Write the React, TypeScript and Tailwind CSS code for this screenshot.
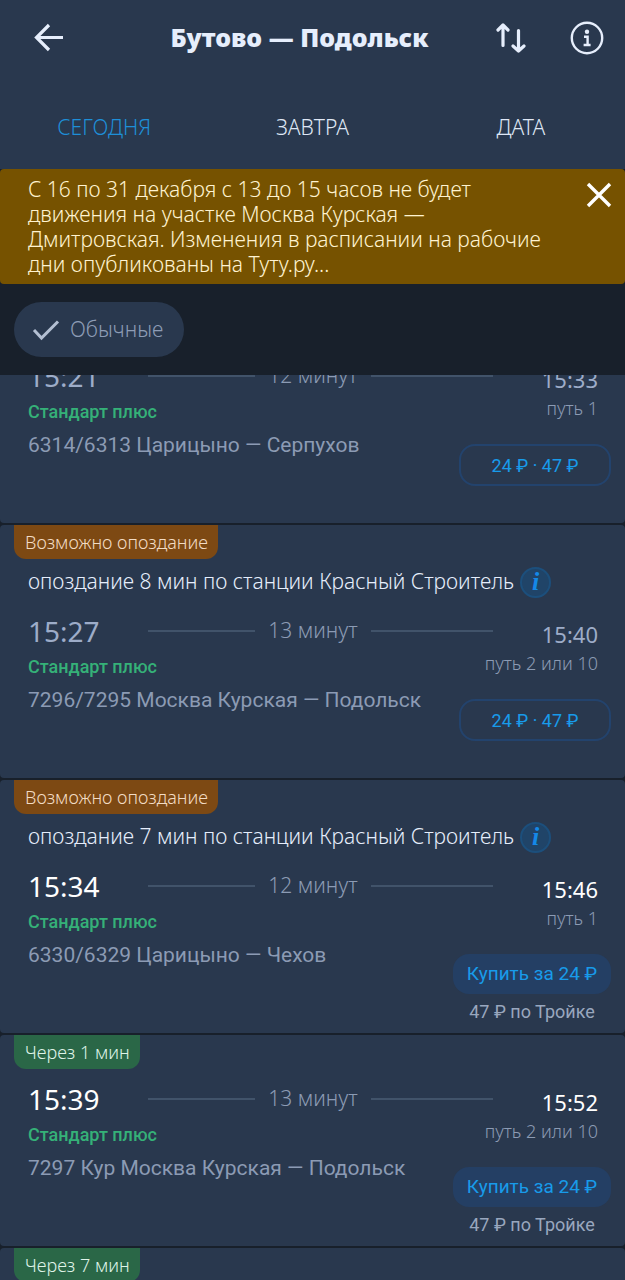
import { useState } from "react";

type Train = {
  departure: string;
  arrival: string;
  duration: string;
  route: string;
  track: string;
  badge?: { text: string; kind: "delay" | "soon" };
  delay?: string;
  gone?: boolean;
};

const TRAINS: Train[] = [
  {
    departure: "15:21",
    arrival: "15:33",
    duration: "12 минут",
    route: "6314/6313 Царицыно — Серпухов",
    track: "путь 1",
    gone: true,
  },
  {
    departure: "15:27",
    arrival: "15:40",
    duration: "13 минут",
    route: "7296/7295 Москва Курская — Подольск",
    track: "путь 2 или 10",
    badge: { text: "Возможно опоздание", kind: "delay" },
    delay: "опоздание 8 мин по станции Красный Строитель",
    gone: true,
  },
  {
    departure: "15:34",
    arrival: "15:46",
    duration: "12 минут",
    route: "6330/6329 Царицыно — Чехов",
    track: "путь 1",
    badge: { text: "Возможно опоздание", kind: "delay" },
    delay: "опоздание 7 мин по станции Красный Строитель",
  },
  {
    departure: "15:39",
    arrival: "15:52",
    duration: "13 минут",
    route: "7297 Кур Москва Курская — Подольск",
    track: "путь 2 или 10",
    badge: { text: "Через 1 мин", kind: "soon" },
  },
  {
    departure: "15:45",
    arrival: "15:58",
    duration: "13 минут",
    route: "6332 Царицыно — Подольск",
    track: "путь 1",
    badge: { text: "Через 7 мин", kind: "soon" },
  },
];

const TABS = ["СЕГОДНЯ", "ЗАВТРА", "ДАТА"];

export default function App() {
  const [tab, setTab] = useState(0);
  const [notice, setNotice] = useState(true);

  return (
    <div className="flex h-screen flex-col overflow-hidden bg-[#18202b] font-['Noto_Sans','Open_Sans',sans-serif] font-light text-[#e6eefc]">
      <header className="shrink-0 bg-[#29384e]">
        <TopBar />
        <nav className="grid h-[94px] grid-cols-3 pt-3">
          {TABS.map((name, i) => (
            <button
              key={name}
              onClick={() => setTab(i)}
              className={`text-[21px] ${tab === i ? "text-[#1e8fd8]" : "text-[#dfe7f5]"}`}
            >
              {name}
            </button>
          ))}
        </nav>
      </header>
      {notice && <Notice onClose={() => setNotice(false)} />}
      <Filters />
      <main className="min-h-0 flex-1 overflow-hidden">
        <ul className="-mt-[63px] space-y-0.5">
          {TRAINS.map((train) => (
            <TrainCard key={train.departure} train={train} />
          ))}
        </ul>
      </main>
    </div>
  );
}

function TopBar() {
  return (
    <div className="grid h-[75px] grid-cols-[1fr_auto_1fr] items-center">
      <button aria-label="Назад" className="ml-[34px] w-[30px]">
        <svg viewBox="0 0 30 30" className="size-[30px]" fill="none" stroke="currentColor" strokeWidth="3.2">
          <path d="M15 2 2.500 14.500 15 27M2.500 14.500H29" />
        </svg>
      </button>
      <h1 className="pr-[26px] text-[25px] font-black">Бутово — Подольск</h1>
      <div className="flex items-center justify-end gap-[43px] pr-[21px]">
        <button aria-label="Поменять направление">
          <svg
            viewBox="0 0 32 32"
            className="size-8"
            fill="none"
            stroke="currentColor"
            strokeWidth="3.2"
            strokeLinecap="round"
            strokeLinejoin="round"
          >
            <path d="M8 23.500V3.500M3 8l5-5 5 5M23.500 8.500v20M18 24l5.500 5 5.500-5" />
          </svg>
        </button>
        <button aria-label="Информация">
          <svg viewBox="0 0 34 34" className="size-[34px]" fill="none" stroke="currentColor" strokeWidth="2.4">
            <circle cx="17" cy="17" r="15.2" />
            <circle cx="17" cy="10.8" r="2.2" fill="currentColor" stroke="none" />
            <path d="M14 15.8h3.6v8M13.6 24h7" />
          </svg>
        </button>
      </div>
    </div>
  );
}

function Notice(props: { onClose: () => void }) {
  return (
    <section className="flex shrink-0 items-start justify-between rounded bg-[#765200] pt-2 pr-3 pb-[7px] pl-7 text-[#fff3d0]">
      <p className="max-w-[520px] text-[21px] leading-[25px]">
        С 16 по 31 декабря с 13 до 15 часов не будет движения на участке Москва
        Курская — Дмитровская. Изменения в расписании на рабочие дни
        опубликованы на Туту.ру...
      </p>
      <button aria-label="Закрыть" onClick={props.onClose} className="pt-1 text-white">
        <svg viewBox="0 0 28 28" className="size-7" fill="none" stroke="currentColor" strokeWidth="3.4">
          <path d="M3 3l22 22M25 3 3 25" />
        </svg>
      </button>
    </section>
  );
}

function Filters() {
  return (
    <div className="shrink-0 px-3.5 py-[18px]">
      <button
        aria-pressed="true"
        className="flex h-[55px] items-center gap-2.5 rounded-full bg-[#29384e] pr-[21px] pl-[18px] text-[21px] text-[#8d9cb5]"
      >
        <svg viewBox="0 0 28 28" className="size-7" fill="none" stroke="#b3bfd2" strokeWidth="3">
          <path d="M2 14l7.500 8L26 5.500" />
        </svg>
        Обычные
      </button>
    </div>
  );
}

function TrainCard(props: { train: Train }) {
  const { train } = props;
  const timeColor = train.gone ? "text-[#9dacc8]" : "text-white";
  return (
    <li className="rounded bg-[#29384e]">
      <div className="h-[34px] px-3.5">
        {train.badge && (
          <span
            className={`inline-block h-[34px] rounded-b-xl pr-2.5 pl-[11px] text-[18px] leading-[34px] ${
              train.badge.kind === "delay"
                ? "bg-[#7d4913] text-[#f3dcc4]"
                : "bg-[#2a6747] text-[#dff3e8]"
            }`}
          >
            {train.badge.text}
          </span>
        )}
      </div>
      {train.delay && (
        <div className="flex h-[42px] items-center gap-1.5 pt-1 pl-7">
          <p className="text-[21px]">{train.delay}</p>
          <DelayInfo />
        </div>
      )}
      <div className="flex h-[82px] pt-3 pr-[27px] pl-7">
        <div className="flex-1">
          <div className="flex h-9 items-center">
            <time className={`w-[120px] text-[28px] font-normal ${timeColor}`}>
              {train.departure}
            </time>
            <span className="h-0.5 w-[107px] bg-[#41536a]" />
            <span className="w-[116px] text-center text-[21px] text-[#8c9bb4]">
              {train.duration}
            </span>
            <span className="h-0.5 flex-1 bg-[#41536a]" />
          </div>
          <p className="mt-1 font-[Roboto] text-[18px] leading-7 font-medium text-[#35b178]">
            Стандарт плюс
          </p>
        </div>
        <div className="w-[105px] pt-1.5 text-right whitespace-nowrap">
          <time className={`block text-[22px] leading-[30px] font-normal ${timeColor}`}>
            {train.arrival}
          </time>
          <p className="flex justify-end text-[18px] leading-7 text-[#8c9bb4]">
            {train.track}
          </p>
        </div>
      </div>
      <div className="flex h-[95px] justify-between pr-3.5 pl-7 font-[Roboto] font-normal">
        <p className="pt-0.5 text-[21px] leading-[30px] text-[#8c9bb4]">
          {train.route}
        </p>
        <Price gone={train.gone} />
      </div>
    </li>
  );
}

function DelayInfo() {
  return (
    <button
      aria-label="Подробнее об опоздании"
      className="flex size-[31px] items-center justify-center rounded-full border-2 border-[#1c4f7c] bg-[#204468] font-['Liberation_Serif',serif] text-[26px] leading-none font-bold text-[#1489e8] italic"
    >
      i
    </button>
  );
}

function Price(props: { gone?: boolean }) {
  if (props.gone) {
    return (
      <div className="pt-4">
        <button className="h-[42px] w-[152px] rounded-2xl border-2 border-[#23436d] text-[18px] text-[#189bea]">
          24 ₽ · 47 ₽
        </button>
      </div>
    );
  }
  return (
    <div className="pt-4 text-center">
      <button className="h-10 w-[158px] rounded-2xl bg-[#243f64] text-[19px] text-[#189bea]">
        Купить за 24 ₽
      </button>
      <p className="mt-1.5 text-[18px] leading-6 text-[#99a7be]">
        47 ₽ по Тройке
      </p>
    </div>
  );
}
